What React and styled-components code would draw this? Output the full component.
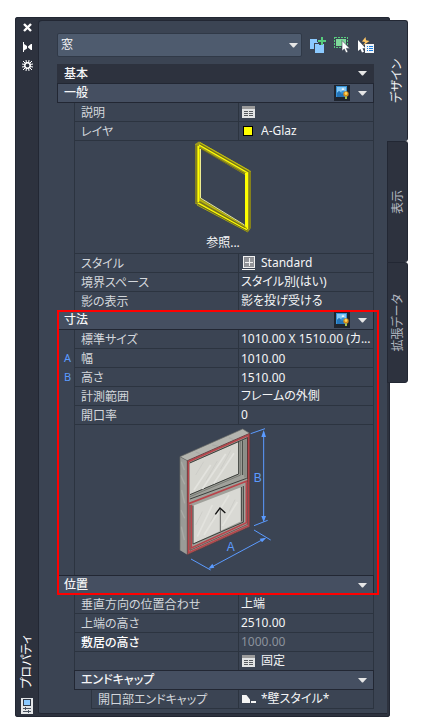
import React from "react";
import styled, { createGlobalStyle } from "styled-components";

const color = {
  body: "#3b4453",
  frame: "#2d323e",
  edge: "#222733",
  header: "#454f61",
  line: "#2c3440",
  field: "#4e5b6e",
  label: "#d3d7dc",
  value: "#f4f5f6",
  muted: "#8b929c",
  blue: "#5b9bff",
};

const GlobalStyle = createGlobalStyle`
  * { box-sizing: border-box; }
  body {
    margin: 0;
    background: #fff;
    font-family: "Noto Sans", "Noto Sans CJK JP", sans-serif;
    font-size: 12px;
    line-height: 18px;
    font-feature-settings: "palt";
  }
  button, input, select {
    appearance: none;
    margin: 0;
    padding: 0;
    border: 0;
    background: transparent;
    color: inherit;
    font: inherit;
    font-feature-settings: inherit;
  }
  svg { display: block; flex: none; }
`;

const Palette = styled.main`
  display: flex;
  align-items: flex-start;
  padding: 17px 15px 11px;
`;

const Frame = styled.div`
  flex: 1;
  min-width: 0;
  display: flex;
  padding: 3px 3px 3px 0;
  background: ${color.frame};
  border-radius: 3px;
  box-shadow: inset 0 0 0 1px ${color.edge};
`;

const TitleBar = styled.header`
  width: 23px;
  flex: none;
  display: flex;
  flex-direction: column;
  align-items: center;
  gap: 6px;
  padding: 1px 0 0 1px;
  color: #fff;
`;

const BarButton = styled.button`
  display: grid;
  place-items: center;
  width: 13px;
  height: 13px;
`;

const BarTitle = styled.h1`
  margin: auto 0 4px;
  font-size: 12px;
  font-weight: 400;
  line-height: 18px;
  writing-mode: vertical-rl;
  text-orientation: sideways;
  transform: rotate(180deg);
`;

const Body = styled.section`
  flex: 1;
  min-width: 0;
  padding: 13px 13px 5px 19px;
  background: ${color.body};
  border-radius: 3px 0 0 3px;
  box-shadow: inset 1px 1px 0 ${color.edge}, inset 0 -1px 0 ${color.edge};
`;

const Toolbar = styled.div`
  display: flex;
  align-items: center;
  gap: 8px;
  margin-bottom: 7px;
`;

const ComboBox = styled.div`
  flex: 1;
  min-width: 0;
  display: grid;
  grid-template-columns: 1fr 16px;
  align-items: center;
  height: 24px;
  background: ${color.field};
  border: 1px solid #303947;
  border-radius: 2px;
  color: ${color.value};
`;

const ComboSelect = styled.select`
  grid-column: 1 / -1;
  grid-row: 1;
  width: 100%;
  height: 22px;
  padding: 0 20px 0 3px;
`;

const ComboArrow = styled.span`
  grid-column: 2;
  grid-row: 1;
  padding: 1px 0 0 4px;
  pointer-events: none;
`;

const ToolButton = styled.button`
  width: 16px;
  height: 16px;
`;

const CategoryHeader = styled.div`
  display: flex;
  align-items: center;
  height: 19px;
  padding: 0 7px;
  background: ${color.frame};
  color: ${color.value};
`;

const SectionHeader = styled(CategoryHeader)`
  position: relative;
  height: 20px;
  margin: 0 0 -1px ${(p) => (p.$nested ? "17px" : "0")};
  padding: 0 6px;
  background: ${color.header};
  border: 1px solid ${color.edge};
`;

const HeaderTitle = styled.h2`
  flex: 1;
  margin: 0;
  font-size: 12px;
  font-weight: 500;
  line-height: 18px;
`;

const PictureButton = styled.button`
  width: 16px;
  height: 16px;
  margin-right: 8px;
  background: #1f252f;
`;

const Row = styled.div`
  display: grid;
  grid-template-columns: ${(p) => (p.$nested ? "34px" : "17px")} minmax(0, 1fr) 136px;
  height: 19px;
  line-height: 20px;
`;

const Marker = styled.span`
  padding-left: 7px;
  color: ${color.blue};
  font-size: 11px;
`;

const Label = styled.label`
  padding-left: 6px;
  border-top: 1px solid ${color.line};
  border-left: 1px solid ${color.line};
  color: ${(p) => (p.$strong ? "#fff" : color.label)};
  font-weight: ${(p) => (p.$strong ? 500 : 400)};
  white-space: nowrap;
  overflow: hidden;
`;

const Cell = styled.div`
  display: flex;
  align-items: center;
  gap: 4px;
  padding-left: 2px;
  border: solid ${color.line};
  border-width: 1px 1px 0;
  line-height: 18px;
  color: ${(p) => (p.$muted ? color.muted : color.value)};
`;

const TextField = styled.input`
  flex: 1;
  min-width: 0;
  height: 18px;
`;

const SelectField = styled.select`
  flex: 1;
  min-width: 0;
  height: 18px;
`;

const ActionButton = styled.button`
  display: flex;
  align-items: center;
  gap: 4px;
`;

const Preview = styled.div`
  display: flex;
  flex-direction: column;
  align-items: center;
  gap: 1px;
  margin-left: 17px;
  padding: ${(p) => (p.$tall ? "2px 0 3px" : "0 2px 1px 0")};
  border: 1px solid ${color.line};
  border-bottom: 0;
  color: ${color.value};
`;

const Highlight = styled.div`
  position: relative;
  &::after {
    content: "";
    position: absolute;
    inset: 0 -5px 0 0;
    border: 2px solid #ff0000;
    pointer-events: none;
  }
`;

const Closing = styled.div`
  height: 1px;
  margin-left: 34px;
  background: ${color.line};
`;

const TabList = styled.nav`
  position: relative;
  flex: none;
  width: 21px;
  margin: 3px 0 0 -3px;
`;

const Tab = styled.button`
  display: grid;
  place-items: center;
  width: 21px;
  height: 121px;
  background: ${(p) => (p.$active ? color.body : color.frame)};
  color: ${(p) => (p.$active ? color.value : "#b4b9c1")};
  border: solid ${color.edge};
  border-width: ${(p) => (p.$active ? "1px 1px 0 0" : "1px 1px 0 1px")};
  border-radius: 0 3px 3px 0;
  &:last-child { border-bottom-width: 1px; }
`;

const TabText = styled.span`
  writing-mode: vertical-rl;
  text-orientation: sideways;
  transform: rotate(180deg);
`;

const CloseIcon = () => (
  <svg width="9" height="9" viewBox="0 0 9 9" stroke="#fff" strokeWidth="2.4">
    <path d="M1 1l7 7M8 1L1 8" />
  </svg>
);

const AutoHideIcon = () => (
  <svg width="9" height="10" viewBox="0 0 9 10" fill="#fff">
    <path d="M0 0h1v2l3 2v2.500L1 8.500V10H0zM8 2h1v6H8L5 5.500v-1z" />
  </svg>
);

const GearIcon = () => (
  <svg width="11" height="11" viewBox="0 0 11 11" stroke="#fff" fill="none">
    <circle cx="5.5" cy="5.5" r="2.7" strokeWidth="1.500" />
    <path
      d="M4 0l.5 3M7 0l-.5 3M4 11l.5-3M7 11l-.5-3M0 4l3 .5M0 7l3-.5M11 4l-3 .5M11 7l-3-.5M1 1l2.500 2.500M10 1L7.500 3.500M1 10l2.500-2.500M10 10L7.500 7.500"
      strokeWidth="1"
    />
  </svg>
);

const PaletteIcon = () => (
  <svg width="12" height="16" viewBox="0 0 12 16" shapeRendering="crispEdges">
    <path fill="#e4e6e8" d="M0 0h12v16H0z" />
    <path fill="#303947" d="M2 1h8v7H2z" />
    <path fill="#8ccaff" d="M3 2h6v5H3z" />
    <path stroke="#4a5360" d="M2 10.5h8M2 13.5h8M4.5 9v3M7.5 12v3" />
  </svg>
);

const Arrow = () => (
  <svg width="9" height="5" viewBox="0 0 9 5" fill="#e6e6e6">
    <path d="M0 0h9L5 4.4H4z" />
  </svg>
);

const AddIcon = () => (
  <svg width="16" height="16" viewBox="0 0 16 16" shapeRendering="crispEdges">
    <path fill="#8ccaff" d="M0 2h7v3h1v1H4v6H0zM5 7h4v1h2V7h3v9H5z" />
    <path fill="#56cc7c" d="M11 0h2v3h3v2h-3v3h-2V5H8V3h3z" />
  </svg>
);

const SelectObjectsIcon = () => (
  <svg width="16" height="16" viewBox="0 0 16 16">
    <path
      d="M.5.5h13v10H.5z"
      fill="none"
      stroke="#56cc7c"
      strokeDasharray="2 1"
      shapeRendering="crispEdges"
    />
    <path fill="#7fd89b" d="M2 2h10v7H2z" />
    <path
      d="M8 3.500v10.500l2.300-2 1.700 3.800 2-.8-1.700-3.600H15.800z"
      fill="#fff"
      stroke="#3b4453"
      strokeWidth=".6"
    />
  </svg>
);

const QuickSelectIcon = () => (
  <svg width="16" height="16" viewBox="0 0 16 16">
    <path fill="#ffc766" d="M7.500 0l-3.500 4.500 3.200.5L5 8.500 11.500 4 8 3.300z" />
    <path fill="#fff" d="M0 3v11l2.500-2L4 15.500l2-.8-1.500-3.500H7.500z" />
    <path fill="#f4f6f8" d="M7 7h9v9H7z" />
    <path
      d="M9 9.500h1.200M11 9.500h4M9 11.500h1.200M11 11.500h4M9 13.500h1.200M11 13.500h4"
      stroke="#1c7fe0"
      shapeRendering="crispEdges"
    />
  </svg>
);

const PictureIcon = () => (
  <svg width="16" height="16" viewBox="0 0 16 16">
    <path fill="#3793d8" d="M2 1h11v11H2z" />
    <path fill="#84c8f5" d="M3 2h9v5L9 5 7 7 5 6 3 8z" />
    <path fill="#2474b8" d="M3 8l2-2 3 3 1-1 2 4H3z" />
    <path fill="#fff" d="M9 2.500l.6 1.200 1.200.4-1.200.6L9 6l-.6-1.300L7.200 4l1.200-.3z" />
    <circle cx="12" cy="9" r="2.700" fill="#d68a16" />
    <circle cx="12" cy="8.500" r="1.400" fill="#ffd75a" />
    <path fill="#a8c34a" d="M11 11.500h2V14h-2z" />
  </svg>
);

const SheetIcon = () => (
  <svg width="16" height="14" viewBox="0 0 16 14" shapeRendering="crispEdges">
    <path fill="#e2e4e5" d="M1 1h13v12H1z" />
    <path fill="#9b9b9b" d="M1 1h13v3H1z" />
    <path
      stroke="#55595e"
      d="M3 6.500h4M8 6.500h4M3 8.500h4M8 8.500h4M3 10.500h4M8 10.500h4"
    />
  </svg>
);

const SwatchIcon = () => (
  <svg width="16" height="12" viewBox="0 0 16 12" shapeRendering="crispEdges">
    <path fill="#ffff00" stroke="#000" d="M2.500 1.500h9v9h-9z" />
  </svg>
);

const WindowStyleIcon = () => (
  <svg width="16" height="16" viewBox="0 0 16 16" shapeRendering="crispEdges">
    <path fill="#f1f1f1" d="M2 1h12v12H2zM1 14h13v1H1z" />
    <path fill="#8a8c91" d="M3 2h10v10H3z" />
    <path fill="#f1f1f1" d="M4 3h8v8H4z" />
    <path fill="#929499" d="M4 3h4v4H4zM9 3h4v4H9zM4 8h4v4H4zM9 8h4v4H9z" />
  </svg>
);

const EndCapIcon = () => (
  <svg width="16" height="12" viewBox="0 0 16 12">
    <path fill="#f4f4f4" d="M1 2h4.500L9 6.500V10H1zM10 8h5v2h-5z" />
  </svg>
);

const StylePreview = () => (
  <svg width="58" height="92" viewBox="195 141 58 92">
    <path
      fill="#9b9720"
      fillRule="evenodd"
      d="M196 144l4-2.500 52 29.500v57l-3 4-53-28.500zM202 149v49.500l44 27.500v-51z"
    />
    <g fill="none" stroke="#ffff00">
      <path d="M247.500 173v56" strokeWidth="3" />
      <path d="M199.500 146v56" strokeWidth="2" />
      <path
        d="M200 145l49 28M199 203l49 27"
        strokeWidth="1.300"
      />
      <path
        d="M201 142.500l49 28M198 205l51 27M201 200l46 27"
        strokeWidth=".7"
        stroke="#d6d300"
      />
    </g>
    <g fill="none" stroke="#5c5a16" strokeWidth=".7">
      <path d="M197 145v58M251 172v57M201 144l49 28M200 148l46 26M200 201.500l48 27M199 204.500l50 27" />
    </g>
    <path d="M201.500 149v49l44 27" fill="none" stroke="#f7f7a0" strokeWidth=".9" />
  </svg>
);

const DimensionPreview = () => (
  <svg width="96" height="145" viewBox="81 36 288 435">
    <path fill="#b4b5af" d="M93 125L281 42l21 13-187 82z" />
    <path fill="#9a9b97" d="M93 125l22 12v282l-22-13z" />
    <path
      d="M97 140l9 25M95 180l12 28M98 225l9 40M96 285l11 25M97 335l9 40M140 111l12 5M190 90l18 4M240 68l16 7"
      stroke="#aaaba6"
      strokeWidth="4"
    />
    <path fill="none" stroke="#6b6d68" strokeWidth="2" d="M93 406V125L281 42l21 13M93 125l22 12" />
    <path fill="#a0a19b" d="M115 137l187-82v280L115 419z" />
    <path fill="#d6d6d0" d="M123 145l145-63v94l-145 62z" />
    <path
      fill="none"
      stroke="#3c3f3b"
      strokeWidth="3"
      d="M122 144l173-76v124M269 80v97l-146 62M281 76v104M123 252l170-62"
    />
    <path fill="none" stroke="#63665f" strokeWidth="2" d="M275 78v102l-152 65M288 72v115" />
    <path fill="#d9d9d4" d="M132 272l144-55v102l-144 67z" />
    <path
      fill="none"
      stroke="#3c3f3b"
      strokeWidth="3"
      d="M132 272v115l152-66M277 216v103M283 213v108"
    />
    <path
      d="M135 225l50-75M160 222l70-105M195 205l60-90M145 365l45-95M165 360l75-120M220 333l45-72"
      stroke="#e3e3de"
      strokeWidth="5"
    />
    <path
      d="M140 180l24-40M171 196l34-58M215 162l30-56M140 330l20-40M185 320l20-36M240 290l18-36"
      stroke="#c9c9c4"
      strokeWidth="2"
    />
    <path
      fill="none"
      stroke="#b8444a"
      strokeWidth="5"
      d="M118 264V140L299 60v272L119 413V266l177-69M292 202v121l-165 76V269"
    />
    <path
      fill="none"
      stroke="#5f2528"
      strokeWidth="2"
      d="M115 264V137l187-82v280L115 419zM296 66v262L123 406V270"
    />
    <path fill="none" stroke="#111" strokeWidth="4" d="M199 298l14-19 16 15" />
    <path d="M214 280v68" stroke="#222" strokeWidth="2" />
    <g stroke={color.blue} strokeWidth="3" fill="none">
      <path d="M305 56l43-15M344 51v264M315 332l41-16M315 345l50 30M126 432l59 33M184 458l162-87" />
    </g>
    <path
      fill={color.blue}
      d="M344 45l-7 21h14zM344 322l-7-19h14zM178 461l12-15 6 12zM352 368l-20 3 7 11z"
    />
    <g fill={color.blue} fontFamily="Liberation Sans, sans-serif" fontSize="36">
      <text x="314" y="200">B</text>
      <text x="233" y="408">A</text>
    </g>
  </svg>
);

function Header({ title, picture, nested }) {
  return (
    <SectionHeader $nested={nested}>
      <HeaderTitle>{title}</HeaderTitle>
      {picture && (
        <PictureButton type="button" aria-label={`${title}の図`}>
          <PictureIcon />
        </PictureButton>
      )}
      <button type="button" aria-label={title} aria-expanded="true">
        <Arrow />
      </button>
    </SectionHeader>
  );
}

function Property({ id, label, value, kind = "text", icon, marker, strong, muted, nested }) {
  return (
    <Row $nested={nested}>
      <Marker>{marker}</Marker>
      <Label htmlFor={id} $strong={strong}>
        {label}
      </Label>
      <Cell $muted={muted}>
        {kind === "button" && (
          <ActionButton id={id} type="button">
            {icon}
            {value}
          </ActionButton>
        )}
        {kind === "select" && (
          <>
            {icon}
            <SelectField id={id} defaultValue={value}>
              <option>{value}</option>
            </SelectField>
          </>
        )}
        {kind === "text" && <TextField id={id} defaultValue={value} readOnly={muted} />}
      </Cell>
    </Row>
  );
}

export default function App() {
  return (
    <>
      <GlobalStyle />
      <Palette>
        <Frame>
          <TitleBar>
            <BarButton type="button" aria-label="閉じる">
              <CloseIcon />
            </BarButton>
            <BarButton type="button" aria-label="自動的に隠す">
              <AutoHideIcon />
            </BarButton>
            <BarButton type="button" aria-label="設定">
              <GearIcon />
            </BarButton>
            <BarTitle>プロパティ</BarTitle>
            <PaletteIcon />
          </TitleBar>

          <Body>
            <Toolbar>
              <ComboBox>
                <ComboSelect aria-label="オブジェクト" defaultValue="窓">
                  <option>窓</option>
                </ComboSelect>
                <ComboArrow>
                  <Arrow />
                </ComboArrow>
              </ComboBox>
              <ToolButton type="button" aria-label="追加">
                <AddIcon />
              </ToolButton>
              <ToolButton type="button" aria-label="オブジェクトを選択">
                <SelectObjectsIcon />
              </ToolButton>
              <ToolButton type="button" aria-label="クイック選択">
                <QuickSelectIcon />
              </ToolButton>
            </Toolbar>

            <CategoryHeader>
              <HeaderTitle>基本</HeaderTitle>
              <button type="button" aria-label="基本" aria-expanded="true">
                <Arrow />
              </button>
            </CategoryHeader>

            <Header title="一般" picture />
            <Property id="description" label="説明" kind="button" icon={<SheetIcon />} />
            <Property id="layer" label="レイヤ" kind="select" value="A-Glaz" icon={<SwatchIcon />} />
            <Preview>
              <StylePreview />
              <button type="button">参照...</button>
            </Preview>
            <Property
              id="style"
              label="スタイル"
              kind="select"
              value="Standard"
              icon={<WindowStyleIcon />}
            />
            <Property id="bound" label="境界スペース" kind="select" value="スタイル別(はい)" />
            <Property id="shadow" label="影の表示" kind="select" value="影を投げ受ける" />

            <Highlight>
              <Header title="寸法" picture />
              <Property
                id="size"
                label="標準サイズ"
                kind="select"
                value="1010.00 X 1510.00 (カ..."
              />
              <Property id="width" label="幅" value="1010.00" marker="A" />
              <Property id="height" label="高さ" value="1510.00" marker="B" />
              <Property id="measure" label="計測範囲" kind="select" value="フレームの外側" />
              <Property id="rise" label="開口率" value="0" />
              <Preview $tall>
                <DimensionPreview />
              </Preview>
              <Header title="位置" />
            </Highlight>

            <Property id="alignment" label="垂直方向の位置合わせ" kind="select" value="上端" />
            <Property id="head" label="上端の高さ" value="2510.00" />
            <Property id="sill" label="敷居の高さ" value="1000.00" strong muted />
            <Property id="fixed" label="" kind="button" value="固定" icon={<SheetIcon />} />

            <Header title="エンドキャップ" nested />
            <Property
              id="endcap"
              label="開口部エンドキャップ"
              kind="select"
              value="*壁スタイル*"
              icon={<EndCapIcon />}
              nested
            />
            <Closing />
          </Body>
        </Frame>

        <TabList role="tablist" aria-label="プロパティ">
          <Tab type="button" role="tab" aria-selected="true" $active>
            <TabText>デザイン</TabText>
          </Tab>
          <Tab type="button" role="tab" aria-selected="false">
            <TabText>表示</TabText>
          </Tab>
          <Tab type="button" role="tab" aria-selected="false">
            <TabText>拡張データ</TabText>
          </Tab>
        </TabList>
      </Palette>
    </>
  );
}
